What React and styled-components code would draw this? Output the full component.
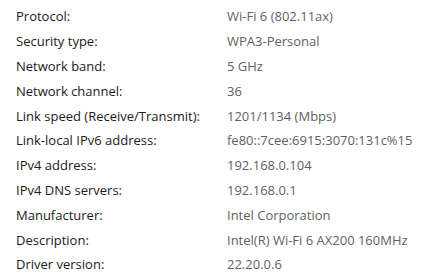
import styled, { createGlobalStyle } from "styled-components";

const GlobalStyle = createGlobalStyle`
    body {
        margin: 0;
        background: #ffffff;
        font-family: 'Open Sans', 'Noto Sans', sans-serif;
    }
`;

const rows = [
    ['Protocol:', 'Wi-Fi 6 (802.11ax)'],
    ['Security type:', 'WPA3-Personal'],
    ['Network band:', '5 GHz'],
    ['Network channel:', '36'],
    ['Link speed (Receive/Transmit):', '1201/1134 (Mbps)'],
    ['Link-local IPv6 address:', 'fe80::7cee:6915:3070:131c%15'],
    ['IPv4 address:', '192.168.0.104'],
    ['IPv4 DNS servers:', '192.168.0.1'],
    ['Manufacturer:', 'Intel Corporation'],
    ['Description:', 'Intel(R) Wi-Fi 6 AX200 160MHz'],
    ['Driver version:', '22.20.0.6'],
];

export default function App() {
    return (
        <>
            <GlobalStyle />
            <Table>
                {rows.map(([label, value]) => (
                    <Row key={label}>
                        <Label>{label}</Label>
                        <Value>{value}</Value>
                    </Row>
                ))}
            </Table>
        </>
    );
}

const Table = styled.div`
    display: flex;
    flex-direction: column;
    padding: 4px 0 0 16px;
`;

const Row = styled.div`
    display: grid;
    grid-template-columns: 211px 1fr;
    height: 24.8px;
    align-items: center;
`;

const Label = styled.span`
    font-size: 13px;
    color: #1b1b1b;
    white-space: nowrap;
`;

const Value = styled.span`
    font-size: 13px;
    color: #5f5f5f;
    white-space: nowrap;
`;
